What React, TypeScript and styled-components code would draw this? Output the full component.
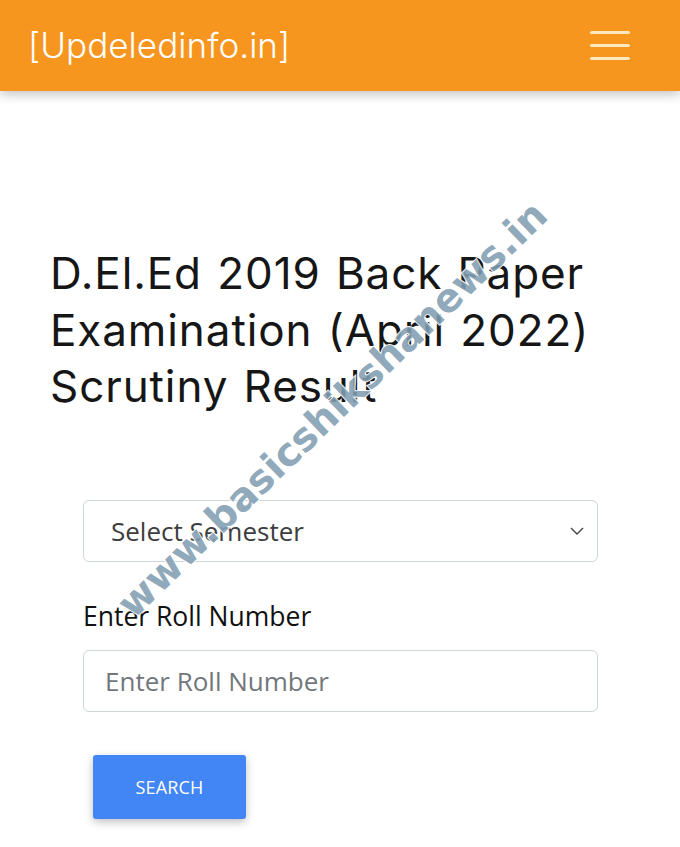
import React from "react";
import styled, { createGlobalStyle } from "styled-components";

const Global = createGlobalStyle`
  html, body { margin: 0; padding: 0; background: #fff; }
  body { width: 680px; min-height: 847px; overflow: hidden; font-family: "Open Sans", "Noto Sans", sans-serif; }
  * { box-sizing: border-box; }
`;

const Page = styled.div`
  position: relative;
  width: 680px;
  height: 847px;
  overflow: hidden;
  background: #fff;
`;

const Header = styled.header`
  height: 91px;
  background: #f7961f;
  display: flex;
  align-items: center;
  justify-content: space-between;
  padding: 0 50px 0 28px;
  box-shadow: 0 4px 10px rgba(0, 0, 0, 0.22);
  position: relative;
  z-index: 1;
`;

const Brand = styled.div`
  font-family: "Inter", "Noto Sans", sans-serif;
  font-weight: 300;
  font-size: 35px;
  color: #fff;
  letter-spacing: 0.05px;
  margin-top: -2px;
`;

const Burger = styled.div`
  width: 40px;
  display: flex;
  flex-direction: column;
  gap: 10px;
  margin-top: -1px;
`;

const BurgerLine = styled.span`
  display: block;
  height: 3px;
  border-radius: 2px;
  background: #ffe8bd;
`;

const Content = styled.main`
  padding: 154px 0 0 50px;
`;

const Title = styled.h1`
  margin: 0;
  font-family: "Inter", "Noto Sans", sans-serif;
  font-weight: 400;
  font-size: 44px;
  line-height: 56.5px;
  color: #161616;
  letter-spacing: 0.9px;
  word-spacing: 2px;
`;

const Form = styled.form`
  margin: 85px 0 0 33px;
  width: 515px;
  display: flex;
  flex-direction: column;
`;

const SelectBox = styled.div`
  height: 62px;
  border: 1px solid #cfd6da;
  border-radius: 6px;
  display: flex;
  align-items: center;
  justify-content: space-between;
  padding: 0 12px 0 27px;
  font-size: 26px;
  color: #3d3d3d;
`;

const Label = styled.label`
  margin-top: 37px;
  font-size: 26.5px;
  color: #111;
  line-height: 34px;
`;

const Input = styled.div`
  margin-top: 17px;
  height: 62px;
  border: 1px solid #cfd6da;
  border-radius: 6px;
  display: flex;
  align-items: center;
  padding: 0 21px;
  font-size: 26px;
  color: #72777b;
`;

const Button = styled.button`
  margin: 43px 0 0 10px;
  width: 153px;
  height: 64px;
  border: none;
  border-radius: 3px;
  background: #4285f4;
  color: #fff;
  font-family: "Open Sans", "Noto Sans", sans-serif;
  font-size: 18px;
  letter-spacing: 0.2px;
  box-shadow: 0 3px 8px rgba(0, 0, 0, 0.25);
`;

const Watermark = styled.div`
  position: absolute;
  left: 332px;
  top: 409px;
  transform: translate(-50%, -50%) rotate(-44deg);
  font-family: "DejaVu Sans", "Liberation Sans", sans-serif;
  font-weight: 700;
  font-size: 39.5px;
  color: rgba(130, 158, 178, 0.9);
  -webkit-text-stroke: 2px rgba(255, 255, 255, 0.95);
  paint-order: stroke fill;
  white-space: nowrap;
  pointer-events: none;
  z-index: 2;
`;

export default function App() {
  return (
    <Page>
      <Global />
      <Header>
        <Brand>[Updeledinfo.in]</Brand>
        <Burger>
          <BurgerLine />
          <BurgerLine />
          <BurgerLine />
        </Burger>
      </Header>
      <Content>
        <Title>
          D.El.Ed 2019 Back Paper
          <br />
          Examination (April 2022)
          <br />
          Scrutiny Result
        </Title>
        <Form onSubmit={(e) => e.preventDefault()}>
          <SelectBox>
            <span>Select Semester</span>
            <svg width="16" height="10" viewBox="0 0 16 10" fill="none">
              <path d="M2 2l6 6 6-6" stroke="#444" strokeWidth="1.4" />
            </svg>
          </SelectBox>
          <Label>Enter Roll Number</Label>
          <Input>Enter Roll Number</Input>
          <Button type="submit">SEARCH</Button>
        </Form>
      </Content>
      <Watermark>www.basicshikshanews.in</Watermark>
    </Page>
  );
}
